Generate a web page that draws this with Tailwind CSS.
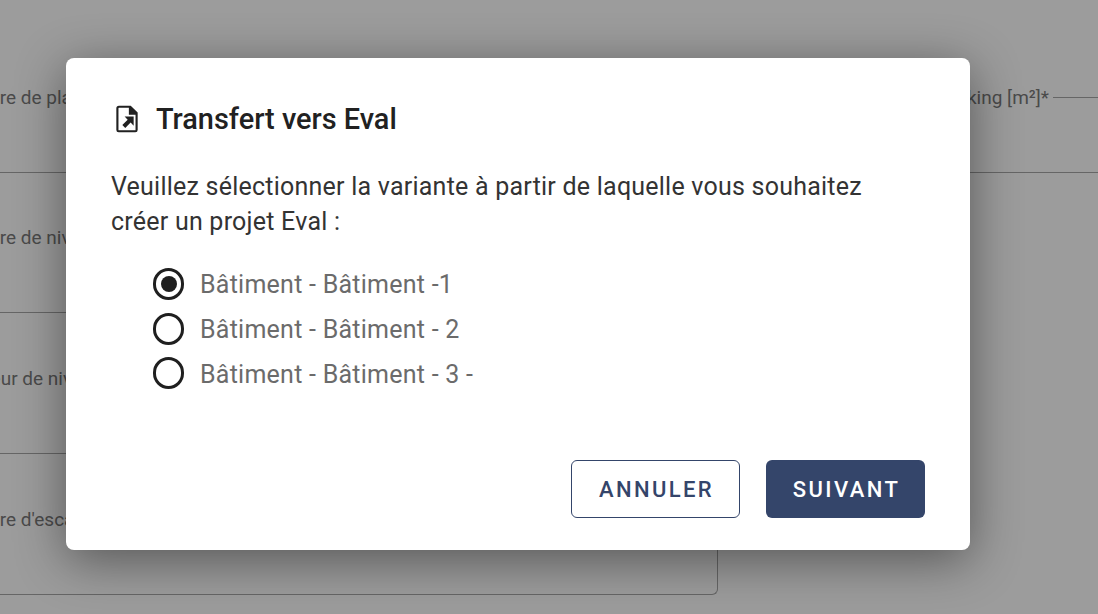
<!DOCTYPE html>
<html lang="fr">
<head>
    <meta charset="UTF-8">
    <script src="https://cdn.jsdelivr.net/npm/@tailwindcss/browser@4"></script>
    <title>Transfert vers Eval</title>
</head>
<body class="relative w-[1098px] h-[614px] overflow-hidden bg-[#9c9c9c] font-['Roboto',sans-serif]">
    <!-- form behind the dialog -->
    <div class="flex h-full text-[19px] leading-[20px] text-[#4a4a4a]">
        <div class="w-[718px] shrink-0 pt-[88px]">
            <div class="h-[85px] border-b border-[#666] -ml-[52px] whitespace-nowrap">Nombre de places</div>
            <div class="h-[140px] border-b border-[#666] -ml-[52px] pt-[55px] whitespace-nowrap">Nombre de niveaux</div>
            <div class="h-[141px] border-b border-[#666] -ml-[50px] pt-[56px] whitespace-nowrap">Hauteur de niveau</div>
            <div class="h-[141px] border-b border-r border-[#666] rounded-br-[6px] -ml-[52px] pt-[56px] whitespace-nowrap">Nombre d'escaliers</div>
        </div>
        <div class="flex-1 pt-[88px]">
            <div class="h-[85px] border-b border-[#666] flex items-start justify-end">
                <span class="whitespace-nowrap">Surface parking [m²]*</span>
                <span class="w-[45px] ml-[4px] mt-[9px] border-t border-[#666]"></span>
            </div>
        </div>
    </div>

    <!-- dialog -->
    <div class="absolute left-[66px] top-[58px] w-[904px] h-[492px] bg-white rounded-[8px] shadow-[0_10px_50px_rgba(0,0,0,0.45)] pl-[45px] pr-[45px] pt-[45px] pb-[32px] flex flex-col">
        <div class="flex items-center h-[32px]">
            <svg class="w-[32px] h-[32px] shrink-0" viewBox="0 0 24 24" fill="#212121">
                <path fill-rule="evenodd" d="M6 2h8.800L20 7.200V20.200a1.800 1.800 0 0 1-1.800 1.800H5.800A1.800 1.800 0 0 1 4 20.200V4a2 2 0 0 1 2-2zm0 1.600a.4.4 0 0 0-.4.4v16.200c0 .1.100.2.200.2h12.400a.2.2 0 0 0 .2-.2V8.800h-5V3.600H6z"/>
                <path d="M10.200 10.200h6.800v6.800l-2.300-2.300-4 4-2.200-2.200 4-4z"/>
            </svg>
            <h2 class="ml-[13px] pt-[1px] text-[28.900px] font-medium text-[#212121]">Transfert vers Eval</h2>
        </div>
        <p class="mt-[34px] text-[25px] leading-[35px] text-[#333] tracking-[0.23px]">Veuillez sélectionner la variante à partir de laquelle vous souhaitez<br>créer un projet Eval :</p>
        <div class="mt-[28px] ml-[42px] flex flex-col gap-[11px] text-[25px] leading-[32px] text-[#6b6b6b] tracking-[0.25px]">
            <label class="flex items-center gap-[16px]">
                <span class="w-[31px] h-[32px] rounded-full border-[3px] border-[#1f1f1f] flex items-center justify-center"><span class="w-[16px] h-[16px] rounded-full bg-[#1f1f1f]"></span></span>
                <span class="pt-[2px]">Bâtiment - Bâtiment -1</span>
            </label>
            <label class="flex items-center gap-[16px]">
                <span class="w-[31px] h-[32px] -mt-[1px] rounded-full border-[3px] border-[#1f1f1f]"></span>
                <span class="pt-[2px]">Bâtiment - Bâtiment - 2</span>
            </label>
            <label class="flex items-center gap-[16px]">
                <span class="w-[31px] h-[32px] -mt-[2px] rounded-full border-[3px] border-[#1f1f1f]"></span>
                <span class="pt-[2px]">Bâtiment - Bâtiment - 3 -</span>
            </label>
        </div>
        <div class="mt-auto flex justify-end gap-[26px] text-[22px] font-medium tracking-[2.4px]">
            <button class="w-[169px] h-[58px] pl-[2px] rounded-[6px] border border-[#34456a] text-[#34456a] bg-white">ANNULER</button>
            <button class="w-[159px] h-[58px] pl-[2px] rounded-[6px] bg-[#34456a] text-white">SUIVANT</button>
        </div>
    </div>
</body>
</html>
